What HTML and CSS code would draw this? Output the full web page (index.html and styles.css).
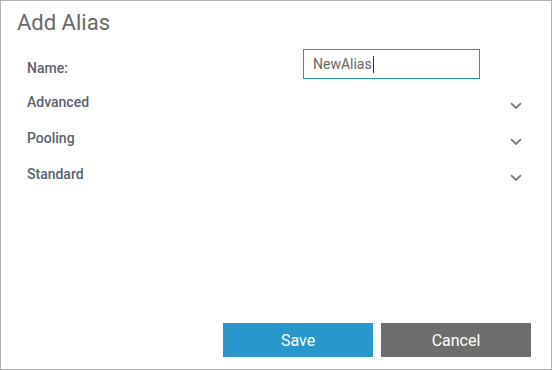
FILE: index.html
```
<!DOCTYPE html>
<html>
<head>
<meta charset="utf-8">
<title>Add Alias</title>
<link rel="stylesheet" href="styles.css">
</head>
<body>
<div class="dialog">
	<div class="title">Add Alias</div>

	<div class="form">
		<div class="row name-row">
			<div class="label">Name:</div>
			<div class="textbox">NewAlias<span class="caret"></span></div>
		</div>
		<div class="row">
			<div class="label">Advanced</div>
			<svg class="chevron" width="12" height="8" viewBox="0 0 12 8"><path d="M1 1.2 L6 6 L11 1.2" fill="none" stroke="#7a7a7a" stroke-width="1.8"/></svg>
		</div>
		<div class="row">
			<div class="label">Pooling</div>
			<svg class="chevron" width="12" height="8" viewBox="0 0 12 8"><path d="M1 1.2 L6 6 L11 1.2" fill="none" stroke="#7a7a7a" stroke-width="1.8"/></svg>
		</div>
		<div class="row">
			<div class="label">Standard</div>
			<svg class="chevron" width="12" height="8" viewBox="0 0 12 8"><path d="M1 1.2 L6 6 L11 1.2" fill="none" stroke="#7a7a7a" stroke-width="1.8"/></svg>
		</div>
	</div>

	<div class="buttons">
		<div class="btn save">Save</div>
		<div class="btn cancel">Cancel</div>
	</div>
</div>
</body>
</html>
```

FILE: styles.css
```
* {
	box-sizing: border-box;
}

body {
	margin: 0;
	font-family: Roboto, "Liberation Sans", sans-serif;
	background: #fff;
}

.dialog {
	width: 552px;
	height: 370px;
	border: 1px solid #b0b0b0;
	display: flex;
	flex-direction: column;
}

.title {
	padding: 7px 0 0 16px;
	font-size: 22px;
	line-height: 30px;
	color: #6a6a6a;
}

.form {
	margin-top: 11px;
	padding-left: 26px;
	padding-right: 29px;
}

.row {
	display: flex;
	align-items: center;
	justify-content: space-between;
	height: 36px;
}

.row.name-row {
	height: 35px;
	align-items: flex-start;
	justify-content: flex-start;
}

.label {
	width: 276px;
	font-size: 14px;
	font-weight: 500;
	line-height: 36px;
	color: #5b6370;
}

.name-row .label {
	padding-top: 1px;
}

.textbox {
	width: 177px;
	height: 30px;
	border: 1px solid #2b93c8;
	padding-left: 9px;
	font-size: 14px;
	line-height: 28px;
	color: #666;
	display: flex;
	align-items: center;
}

.caret {
	display: inline-block;
	width: 1px;
	height: 17px;
	background: #333;
	margin-left: 1px;
}

.chevron {
	margin-top: 7px;
}

.buttons {
	margin-top: auto;
	display: flex;
	justify-content: flex-end;
	gap: 8px;
	padding: 0 20px 12px 0;
}

.btn {
	width: 150px;
	height: 34px;
	line-height: 35px;
	text-align: center;
	color: #fff;
	font-size: 16px;
}

.save {
	background: #2996cc;
}

.cancel {
	background: #6e6f6c;
}
```
